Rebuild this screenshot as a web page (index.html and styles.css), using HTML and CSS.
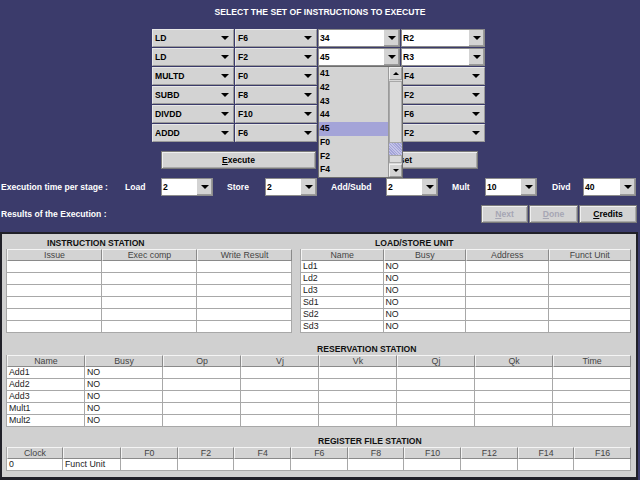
FILE: index.html
```html
<!DOCTYPE html>
<html>
<head>
<meta charset="utf-8">
<link rel="stylesheet" href="styles.css">
</head>
<body>
<div class="app">
  <div class="title">SELECT THE SET OF INSTRUCTIONS TO EXECUTE</div>

  <div class="instr-grid">
    <div class="combo"><span class="val">LD</span><span class="arr"></span></div>
    <div class="combo"><span class="val">F6</span><span class="arr"></span></div>
    <div class="combo edit"><span class="val">34</span><span class="btn"><span class="arr"></span></span></div>
    <div class="combo edit"><span class="val">R2</span><span class="btn"><span class="arr"></span></span></div>

    <div class="combo"><span class="val">LD</span><span class="arr"></span></div>
    <div class="combo"><span class="val">F2</span><span class="arr"></span></div>
    <div class="combo edit"><span class="val">45</span><span class="btn"><span class="arr"></span></span></div>
    <div class="combo edit"><span class="val">R3</span><span class="btn"><span class="arr"></span></span></div>

    <div class="combo"><span class="val">MULTD</span><span class="arr"></span></div>
    <div class="combo"><span class="val">F0</span><span class="arr"></span></div>
    <div class="combo covered"><span class="val"></span><span class="arr"></span></div>
    <div class="combo"><span class="val">F4</span><span class="arr"></span></div>

    <div class="combo"><span class="val">SUBD</span><span class="arr"></span></div>
    <div class="combo"><span class="val">F8</span><span class="arr"></span></div>
    <div class="combo covered"><span class="val"></span><span class="arr"></span></div>
    <div class="combo"><span class="val">F2</span><span class="arr"></span></div>

    <div class="combo"><span class="val">DIVDD</span><span class="arr"></span></div>
    <div class="combo"><span class="val">F10</span><span class="arr"></span></div>
    <div class="combo covered"><span class="val"></span><span class="arr"></span></div>
    <div class="combo"><span class="val">F6</span><span class="arr"></span></div>

    <div class="combo"><span class="val">ADDD</span><span class="arr"></span></div>
    <div class="combo"><span class="val">F6</span><span class="arr"></span></div>
    <div class="combo covered"><span class="val"></span><span class="arr"></span></div>
    <div class="combo"><span class="val">F2</span><span class="arr"></span></div>
  </div>

  <div class="action-row">
    <div class="button execute"><u>E</u>xecute</div>
    <div class="button reset"><span class="reset-text">set</span></div>
  </div>

  <div class="time-row">
    <span class="lbl lbl-exec">Execution time per stage :</span>
    <span class="lbl lbl-load">Load</span>
    <div class="combo edit small"><span class="val">2</span><span class="btn"><span class="arr"></span></span></div>
    <span class="lbl lbl-store">Store</span>
    <div class="combo edit small"><span class="val">2</span><span class="btn"><span class="arr"></span></span></div>
    <span class="lbl lbl-add">Add/Subd</span>
    <div class="combo edit small"><span class="val">2</span><span class="btn"><span class="arr"></span></span></div>
    <span class="lbl lbl-mult">Mult</span>
    <div class="combo edit small"><span class="val">10</span><span class="btn"><span class="arr"></span></span></div>
    <span class="lbl lbl-divd">Divd</span>
    <div class="combo edit small wide"><span class="val">40</span><span class="btn"><span class="arr"></span></span></div>
  </div>

  <div class="result-row">
    <span class="lbl">Results of the Execution :</span>
    <div class="result-buttons">
      <div class="button disabled b-next"><u>N</u>ext</div>
      <div class="button disabled b-done"><u>D</u>one</div>
      <div class="button b-credits"><u>C</u>redits</div>
    </div>
  </div>

  <div class="panel">
    <div class="top-block">
      <div class="section sec-instr">
        <div class="sec-title t-instr">INSTRUCTION STATION</div>
        <div class="tbl cols3">
          <div class="th">Issue</div><div class="th">Exec comp</div><div class="th">Write Result</div>
          <div class="td"></div><div class="td"></div><div class="td"></div>
          <div class="td"></div><div class="td"></div><div class="td"></div>
          <div class="td"></div><div class="td"></div><div class="td"></div>
          <div class="td"></div><div class="td"></div><div class="td"></div>
          <div class="td"></div><div class="td"></div><div class="td"></div>
          <div class="td"></div><div class="td"></div><div class="td"></div>
        </div>
      </div>
      <div class="section sec-ls">
        <div class="sec-title t-ls">LOAD/STORE UNIT</div>
        <div class="tbl cols4">
          <div class="th">Name</div><div class="th">Busy</div><div class="th">Address</div><div class="th">Funct Unit</div>
          <div class="td">Ld1</div><div class="td">NO</div><div class="td"></div><div class="td"></div>
          <div class="td">Ld2</div><div class="td">NO</div><div class="td"></div><div class="td"></div>
          <div class="td">Ld3</div><div class="td">NO</div><div class="td"></div><div class="td"></div>
          <div class="td">Sd1</div><div class="td">NO</div><div class="td"></div><div class="td"></div>
          <div class="td">Sd2</div><div class="td">NO</div><div class="td"></div><div class="td"></div>
          <div class="td">Sd3</div><div class="td">NO</div><div class="td"></div><div class="td"></div>
        </div>
      </div>
    </div>

    <div class="section sec-rs">
      <div class="sec-title t-rs">RESERVATION STATION</div>
      <div class="tbl cols8">
        <div class="th">Name</div><div class="th">Busy</div><div class="th">Op</div><div class="th">Vj</div><div class="th">Vk</div><div class="th">Qj</div><div class="th">Qk</div><div class="th">Time</div>
        <div class="td">Add1</div><div class="td">NO</div><div class="td"></div><div class="td"></div><div class="td"></div><div class="td"></div><div class="td"></div><div class="td"></div>
        <div class="td">Add2</div><div class="td">NO</div><div class="td"></div><div class="td"></div><div class="td"></div><div class="td"></div><div class="td"></div><div class="td"></div>
        <div class="td">Add3</div><div class="td">NO</div><div class="td"></div><div class="td"></div><div class="td"></div><div class="td"></div><div class="td"></div><div class="td"></div>
        <div class="td">Mult1</div><div class="td">NO</div><div class="td"></div><div class="td"></div><div class="td"></div><div class="td"></div><div class="td"></div><div class="td"></div>
        <div class="td">Mult2</div><div class="td">NO</div><div class="td"></div><div class="td"></div><div class="td"></div><div class="td"></div><div class="td"></div><div class="td"></div>
      </div>
    </div>

    <div class="section sec-rf">
      <div class="sec-title t-rf">REGISTER FILE STATION</div>
      <div class="tbl cols11">
        <div class="th">Clock</div><div class="th"></div><div class="th">F0</div><div class="th">F2</div><div class="th">F4</div><div class="th">F6</div><div class="th">F8</div><div class="th">F10</div><div class="th">F12</div><div class="th">F14</div><div class="th">F16</div>
        <div class="td">0</div><div class="td">Funct Unit</div><div class="td"></div><div class="td"></div><div class="td"></div><div class="td"></div><div class="td"></div><div class="td"></div><div class="td"></div><div class="td"></div><div class="td"></div>
      </div>
    </div>
  </div>

  <div class="popup">
    <div class="list">
      <div class="item">41</div>
      <div class="item">42</div>
      <div class="item">43</div>
      <div class="item">44</div>
      <div class="item sel">45</div>
      <div class="item">F0</div>
      <div class="item">F2</div>
      <div class="item">F4</div>
    </div>
    <div class="scrollbar">
      <div class="sb-btn"><span class="up"></span></div>
      <div class="sb-track">
        <div class="sb-box"></div>
        <div class="sb-thumb"></div>
        <div class="sb-box2"></div>
      </div>
      <div class="sb-btn"><span class="arr"></span></div>
    </div>
  </div>
</div>
</body>
</html>
```

FILE: styles.css
```css
* { box-sizing: border-box; }
html, body { margin: 0; padding: 0; }
body {
  background: #3b3b6b;
  font-family: "Liberation Sans", Arial, sans-serif;
  font-size: 8.8px;
}
.app {
  position: relative;
  width: 640px;
  height: 480px;
  overflow: hidden;
}
.title {
  height: 29px;
  padding-top: 6px;
  line-height: 12px;
  text-align: center;
  color: #fff;
  font-weight: bold;
  font-size: 8.6px;
}
.instr-grid {
  margin-left: 152px;
  display: grid;
  grid-template-columns: 82px 82px 82px 84px;
  grid-auto-rows: 18px;
  gap: 1px;
}
.combo {
  display: flex;
  align-items: center;
  background: #d3d3d3;
  border: 1px solid #9a9a9a;
  border-top-color: #e8e8e8;
  border-left-color: #e8e8e8;
  font-weight: bold;
  font-size: 8.6px;
  color: #000;
  height: 18px;
}
.combo .val {
  flex: 1;
  padding-left: 2px;
  line-height: 16px;
}
.combo > .arr { margin-right: 4px; }
.arr {
  display: inline-block;
  width: 0;
  height: 0;
  border-left: 4px solid transparent;
  border-right: 4px solid transparent;
  border-top: 4px solid #000;
}
.up {
  display: inline-block;
  width: 0;
  height: 0;
  border-left: 3px solid transparent;
  border-right: 3px solid transparent;
  border-bottom: 3px solid #000;
}
.combo.edit {
  background: #fff;
  border: 1px solid #8c8c8c;
}
.combo.edit .val { padding-left: 1px; }
.combo.edit .btn {
  width: 16px;
  height: 16px;
  background: #d3d3d3;
  border-left: 1px solid #fff;
  box-shadow: inset -1px -1px 0 #9a9a9a;
  display: flex;
  align-items: center;
  justify-content: center;
}
.combo.small { width: 52px; }
.combo.small.wide { width: 53px; }

.action-row {
  margin-top: 9px;
  padding-left: 161px;
  display: flex;
  gap: 4px;
  height: 18px;
}
.button {
  height: 18px;
  background: #d3d3d3;
  border: 1px solid #7a7a7a;
  box-shadow: inset 1px 1px 0 #f0f0f0, inset -1px -1px 0 #a8a8a8;
  display: flex;
  align-items: center;
  justify-content: center;
  font-weight: bold;
  font-size: 8.6px;
  color: #000;
}
.button u { text-decoration: underline; }
.execute { width: 155px; }
.reset { width: 158px; padding-left: 14px; }

.time-row {
  margin-top: 9px;
  height: 18px;
  display: flex;
  align-items: center;
}
.lbl {
  color: #fff;
  font-weight: bold;
  font-size: 8.6px;
  white-space: nowrap;
}
.lbl-exec { padding-left: 1px; width: 125px; }
.lbl-load { width: 36px; }
.lbl-store { width: 38px; margin-left: 14px; }
.lbl-add { width: 55px; margin-left: 14px; }
.lbl-mult { width: 33px; margin-left: 14px; }
.lbl-divd { width: 31px; margin-left: 15px; }

.result-row {
  margin-top: 9px;
  height: 18px;
  display: flex;
  align-items: center;
  padding-left: 1px;
}
.result-buttons {
  margin-left: auto;
  margin-right: 3px;
  display: flex;
  gap: 1px;
}
.b-next { width: 47px; }
.b-done { width: 49px; }
.b-credits { width: 58px; }
.button.disabled { color: #a6a6b4; }

.panel {
  margin-top: 9px;
  margin-right: 2px;
  height: 248px;
  background: #d0d0d0;
  border: 2px solid #202028;
  border-bottom-width: 3px;
  padding: 3px 5px 0 4px;
}
.top-block {
  display: flex;
  gap: 8px;
}
.sec-instr { width: 286px; }
.sec-ls { width: 331px; }
.sec-title {
  height: 12px;
  line-height: 12px;
  font-weight: bold;
  font-size: 8.6px;
  color: #111;
  white-space: nowrap;
}
.t-instr { padding-left: 41px; }
.t-ls { padding-left: 75px; }
.t-rs { padding-left: 311px; }
.t-rf { padding-left: 312px; }
.sec-rs { margin-top: 10px; }
.sec-rf { margin-top: 8px; }

.tbl {
  display: grid;
  grid-auto-rows: 12px;
  border-left: 1px solid #a8a8a8;
}
.cols3 { grid-template-columns: repeat(3, 1fr); }
.cols4 { grid-template-columns: repeat(4, 1fr); }
.cols8 { grid-template-columns: repeat(8, 1fr); }
.cols11 { grid-template-columns: 56px 58px repeat(9, 1fr); }
.th {
  background: #d3d3d3;
  border-top: 1px solid #f4f4f4;
  border-left: 1px solid #f4f4f4;
  border-right: 1px solid #8a8a8a;
  border-bottom: 1px solid #8a8a8a;
  text-align: center;
  color: #444;
  line-height: 10px;
  font-size: 8.8px;
  overflow: hidden;
}
.td {
  background: #fff;
  border-right: 1px solid #a8a8a8;
  border-bottom: 1px solid #a8a8a8;
  padding-left: 2px;
  line-height: 11px;
  color: #222;
  font-size: 8.8px;
  overflow: hidden;
  white-space: nowrap;
}

.popup {
  position: absolute;
  left: 318px;
  top: 66px;
  width: 85px;
  height: 112px;
  background: #d3d3d3;
  border: 1px solid #6e6e6e;
  display: flex;
}
.list { flex: 1; }
.item {
  height: 13.75px;
  line-height: 13.75px;
  padding-left: 1px;
  font-weight: bold;
  font-size: 8.6px;
  color: #000;
}
.item.sel { background: #a4a4d8; }
.scrollbar {
  width: 14px;
  display: flex;
  flex-direction: column;
  border-left: 1px solid #9a9a9a;
  background: #d8d8d8;
}
.sb-btn {
  height: 13px;
  background: #d3d3d3;
  border: 1px solid #9a9a9a;
  border-top-color: #f0f0f0;
  border-left-color: #f0f0f0;
  display: flex;
  align-items: center;
  justify-content: center;
}
.sb-btn .arr {
  border-left-width: 3px;
  border-right-width: 3px;
  border-top-width: 3px;
}
.sb-track {
  flex: 1;
  display: flex;
  flex-direction: column;
  padding: 1px 0;
}
.sb-box {
  height: 62px;
  border: 1px solid #a8a8a8;
  background: #dadada;
}
.sb-thumb {
  height: 12px;
  background: repeating-linear-gradient(45deg, #a4a4d8 0 1px, #c4c4e8 1px 2px);
}
.sb-box2 {
  flex: 1;
  border: 1px solid #a8a8a8;
  background: #dadada;
}
```
